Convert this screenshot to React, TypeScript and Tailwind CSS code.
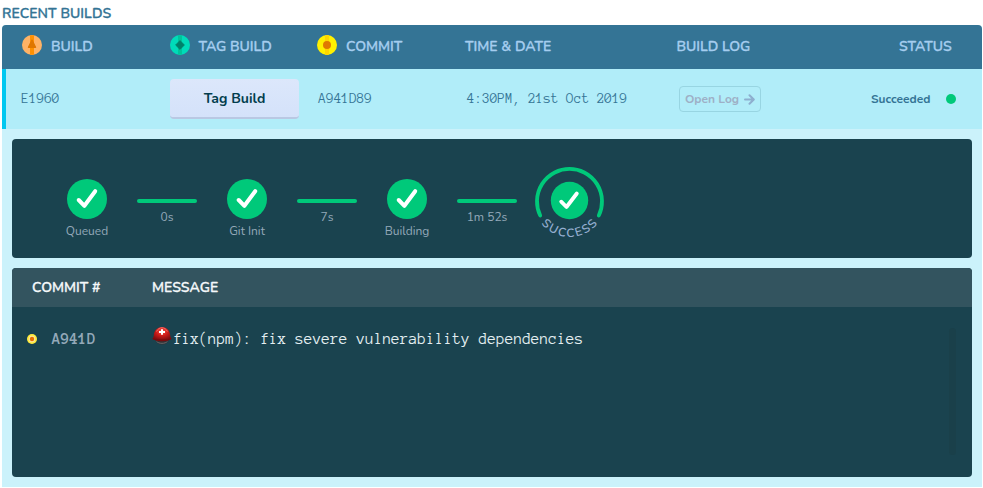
import type { ReactNode } from "react";

const sans = "font-['Nunito','Lato',sans-serif]";
const mono = "font-['Anonymous_Pro','Overpass_Mono','Liberation_Mono',monospace]";
const heading = "text-[14px] font-semibold [-webkit-text-stroke:0.3px_currentColor]";

function BuildIcon() {
  return (
    <svg width="20" height="20" viewBox="0 0 20 20" className="shrink-0">
      <circle cx="10" cy="10" r="10" fill="#ffb366" />
      <path d="M8 .2h4v19.6H8z" fill="#ff9100" />
      <path d="M10 5 13.600 12.300H6.400z" fill="#df7700" stroke="#df7700" strokeWidth="1.200" strokeLinejoin="round" />
    </svg>
  );
}

function TagIcon() {
  return (
    <svg width="20" height="20" viewBox="0 0 20 20" className="shrink-0">
      <circle cx="10" cy="10" r="10" fill="#00dbb9" />
      <path d="M8 .2h4v19.6H8z" fill="#00c49a" />
      <path d="M10 5.600 14.400 10 10 14.400 5.600 10z" fill="#00806a" stroke="#00806a" strokeWidth=".8" strokeLinejoin="round" />
    </svg>
  );
}

function CommitIcon() {
  return (
    <svg width="20" height="20" viewBox="0 0 20 20" className="shrink-0">
      <circle cx="10" cy="10" r="10" fill="#fff000" />
      <path d="M8 .2h4v19.6H8z" fill="#ffd500" />
      <circle cx="10" cy="10" r="4" fill="#e07a00" />
    </svg>
  );
}

function Helmet() {
  return (
    <svg width="20" height="20" viewBox="0 0 20 20" className="shrink-0">
      <defs>
        <radialGradient id="shell" cx=".5" cy=".3" r=".6">
          <stop offset="0" stopColor="#f5564c" />
          <stop offset=".5" stopColor="#d01c19" />
          <stop offset="1" stopColor="#860d10" />
        </radialGradient>
      </defs>
      <path d="M3.500 14c1 3 3.500 4.500 6.500 4.500s5.500-1.500 6.500-4.500z" fill="#322f33" />
      <path d="M4.500 15.300c2 2.700 9 2.700 11 0" fill="none" stroke="#77787b" strokeWidth=".8" />
      <path d="M.4 12.800C1.500 11.500 1.700 10 1.900 8.500 2.600 3.800 6 1 10 1s7.400 2.800 8.100 7.500c.2 1.500.4 3 1.500 4.300-1.600 1.600-5 2.400-9.600 2.400S2 14.400.4 12.800z" fill="url(#shell)" />
      <path d="M.8 12.700c3.500 2 14.900 2 18.400 0" fill="none" stroke="#750b0d" strokeWidth="1" />
      <path d="M4.500 5.500C5.800 2.900 7.800 1.700 10 1.700s4.200 1.200 5.500 3.800" fill="none" stroke="#ff9a92" strokeWidth=".6" />
      <path d="M9 3.200h2v1.800h2v2h-2v1.800H9V7H7V5h2z" fill="#fff" />
    </svg>
  );
}

function Check({ size }: { size: number }) {
  return (
    <svg width={size} height={size} viewBox="0 0 40 40">
      <circle cx="20" cy="20" r="20" fill="#00c97a" />
      <path d="M11.700 21 17.400 26.800 28.200 12.200" fill="none" stroke="#fff" strokeWidth="4" strokeLinecap="round" strokeLinejoin="round" />
    </svg>
  );
}

function Step({ children }: { children: ReactNode }) {
  return (
    <div className="flex w-[100px] flex-col items-center pt-[40px]">
      <Check size={40} />
      <div className="mt-[3px] text-[12px] leading-[18px] text-[#94a9b9]">{children}</div>
    </div>
  );
}

function Wait({ children }: { children: ReactNode }) {
  return (
    <div className="flex w-[60px] flex-col items-center pt-[60px]">
      <div className="h-[4px] w-[60px] rounded-full bg-[#00c97a]" />
      <div className="mt-[5px] text-[12px] leading-[18px] text-[#94a9b9]">{children}</div>
    </div>
  );
}

function SuccessDial() {
  return (
    <svg width="80" height="90" viewBox="0 0 80 90" className="ml-[12px] mt-[22px]">
      <defs>
        <path id="rim" d="M4 39.500a36.500 36.500 0 0 0 73 0" />
      </defs>
      <path d="M11.200 54.500A32.500 32.500 0 1 1 69.800 54.500" fill="none" stroke="#00c97a" strokeWidth="3.800" strokeLinecap="round" />
      <circle cx="40.500" cy="39.500" r="18.700" fill="#00c97a" />
      <path d="M32.200 40.700 37.500 46 47.800 32.500" fill="none" stroke="#fff" strokeWidth="3.800" strokeLinecap="round" strokeLinejoin="round" />
      <text fill="#94aed0" fontSize="12" letterSpacing="1.700" fontWeight="600">
        <textPath href="#rim" startOffset="50.700%" textAnchor="middle">SUCCESS</textPath>
      </text>
    </svg>
  );
}

export default function App() {
  return (
    <div className={`${sans} h-[488px] w-[983px] overflow-hidden bg-white`}>
      <h2 className={`${heading} h-[25px] pl-[2px] pt-[4px] leading-[20px] tracking-[0.05px] text-[#347495]`}>RECENT BUILDS</h2>
      <section className="ml-[2px] h-[462px] w-[980px] overflow-hidden rounded-t-[4px] bg-[#cbf2fb]">
        <div className={`${heading} grid h-[44px] grid-cols-[148px_147px_148px_211.5px_222.5px_1fr] items-center bg-[#347495] pl-[20px] leading-[20px] text-[#a5cdef]`}>
          <div className="flex items-center gap-[9px] pb-[4px]"><BuildIcon /><span className="pt-[3px]">BUILD</span></div>
          <div className="flex items-center gap-[9px] pb-[4px]"><TagIcon /><span className="-ml-[0.500px] pt-[3px]">TAG BUILD</span></div>
          <div className="flex items-center gap-[9px] pb-[4px]"><CommitIcon /><span className="pt-[3px]">COMMIT</span></div>
          <div>TIME &amp; DATE</div>
          <div>BUILD LOG</div>
          <div>STATUS</div>
        </div>
        <div className="grid h-[60px] grid-cols-[148px_148px_148px_213px_192px_1fr] items-center border-l-[4px] border-[#00c8f0] bg-[#b1edf9] pl-[16px] text-[#347495]">
          <div className={`${mono} -ml-[0.500px] pt-[1px] text-[14px]`}>E1960</div>
          <button className="h-[40px] w-[129px] rounded-[4px] border-b-2 border-[#b9c8e3] bg-gradient-to-b from-[#dce7fb] to-[#d4e2fa] text-[14px] font-bold text-[#023d4d]">Tag Build</button>
          <div className={`${mono} pl-[0.600px] pt-[1px] text-[14px]`}>A941D89</div>
          <div className={`${mono} whitespace-pre pl-[1px] pt-[1px] text-[14px]`}>4:30PM, 21st Oct 2019</div>
          <button className="flex h-[26px] w-[82px] items-center justify-center gap-[5px] rounded-[4px] border border-[#98d5e2] text-[12px] font-bold text-[#9eb0c6]">
            <span>Open Log</span>
            <svg width="11" height="11" viewBox="0 0 11 11" fill="none" stroke="#8eafcf" strokeWidth="2" strokeLinecap="round" strokeLinejoin="round"><path d="M1 5.500h8.500M5.500 1.200l4.300 4.300-4.300 4.300" /></svg>
          </button>
          <div className="flex items-center gap-[15px] text-[12px] font-bold"><span>Succeeded</span><span className="h-[10px] w-[10px] rounded-full bg-[#00c97a]" /></div>
        </div>
        <div className="mx-[10px] mt-[10px] flex h-[119px] w-[960px] rounded-[4px] bg-[#1a434f] pl-[25px]">
          <Step>Queued</Step>
          <Wait>0s</Wait>
          <Step>Git Init</Step>
          <Wait>7s</Wait>
          <Step>Building</Step>
          <Wait>1m 52s</Wait>
          <SuccessDial />
        </div>
        <div className="mx-[10px] mt-[10px] h-[209px] w-[960px] overflow-hidden rounded-[4px] bg-[#1a434f]">
          <div className={`${heading} grid h-[39px] grid-cols-[120px_1fr] items-center bg-[#33545f] pl-[20px] text-[#f5f8fa]`}>
            <div>COMMIT #</div>
            <div>MESSAGE</div>
          </div>
          <div className="flex h-[170px] justify-between pl-[15px] pr-[16px] pt-[20px]">
            <div className="flex h-[24px] items-center">
              <svg width="10" height="10" viewBox="0 0 10 10"><circle cx="5" cy="5" r="5" fill="#ffec3d" /><circle cx="5" cy="5" r="3.200" fill="#ffe79a" /><circle cx="5" cy="5" r="2.200" fill="#e86f00" /></svg>
              <span className={`${mono} ml-[15px] w-[100px] text-[16px] font-bold text-[#94a9b9]`}>A941D</span>
              <span className="mb-[6px] flex"><Helmet /></span>
              <span className={`${mono} ml-[1px] whitespace-pre text-[16px] text-[#e4eff2]`}>fix(npm): fix severe vulnerability dependencies</span>
            </div>
            <div className="mt-[1px] h-[127px] w-[7px] rounded-full bg-[#1a404a]" />
          </div>
        </div>
      </section>
    </div>
  );
}
